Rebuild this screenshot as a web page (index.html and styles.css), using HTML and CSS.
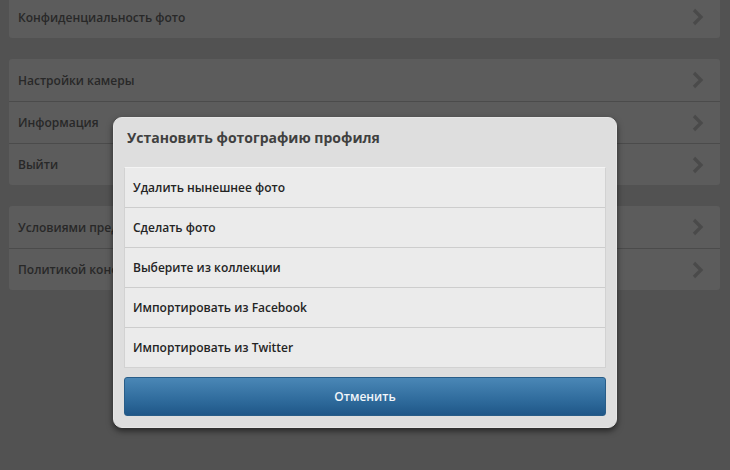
FILE: index.html
```html
<!DOCTYPE html>
<html lang="ru">
<head>
  <meta charset="UTF-8">
  <title>Настройки</title>
  <link rel="stylesheet" href="styles.css">
</head>
<body>
  <div class="settings">
    <ul class="group first">
      <li>Конфиденциальность фото<svg class="chev" viewBox="0 0 12 18"><polyline points="2,2 9,9 2,16"/></svg></li>
    </ul>
    <ul class="group">
      <li>Настройки камеры<svg class="chev" viewBox="0 0 12 18"><polyline points="2,2 9,9 2,16"/></svg></li>
      <li>Информация<svg class="chev" viewBox="0 0 12 18"><polyline points="2,2 9,9 2,16"/></svg></li>
      <li>Выйти<svg class="chev" viewBox="0 0 12 18"><polyline points="2,2 9,9 2,16"/></svg></li>
    </ul>
    <ul class="group">
      <li>Условиями предоставления услуг<svg class="chev" viewBox="0 0 12 18"><polyline points="2,2 9,9 2,16"/></svg></li>
      <li>Политикой конфиденциальности<svg class="chev" viewBox="0 0 12 18"><polyline points="2,2 9,9 2,16"/></svg></li>
    </ul>
  </div>

  <div class="dialog">
    <h2 class="dialog-title">Установить фотографию профиля</h2>
    <ul class="options">
      <li>Удалить нынешнее фото</li>
      <li>Сделать фото</li>
      <li>Выберите из коллекции</li>
      <li>Импортировать из Facebook</li>
      <li>Импортировать из Twitter</li>
    </ul>
    <button class="cancel">Отменить</button>
  </div>
</body>
</html>
```

FILE: styles.css
```css
*{margin:0;padding:0;box-sizing:border-box;}

body{background:#525252;font-family:"Open Sans","DejaVu Sans",sans-serif;overflow:hidden;width:730px;height:470px;}

/* фон: список настроек под диалогом */
.settings{padding:0 10px 0 9px;display:flex;flex-direction:column;gap:21px;}
.group{list-style:none;background:#5c5c5c;border-radius:3px;}
.group.first{margin-top:-4px;}
.group li{height:42px;display:flex;align-items:center;justify-content:space-between;padding:0 16px 0 9px;font-size:12px;font-weight:600;color:#282828;border-top:1px solid #4b4b4b;}
.group li:first-child{border-top:none;}
.chev{width:12px;height:18px;}
.chev polyline{fill:none;stroke:#4a4a4a;stroke-width:3.2;}

/* диалог */
.dialog{position:absolute;left:113px;top:117px;width:504px;height:311px;background:#dedede;border-radius:9px;padding:0 10px;box-shadow:0 3px 6px rgba(0,0,0,.55);border:1px solid #e6e6e6;}
.dialog-title{height:49px;padding:10px 0 0 3px;line-height:20px;font-size:14px;font-weight:700;color:#404040;}
.options{list-style:none;background:#ebebeb;border:1px solid #d2d2d2;border-top-color:#f4f4f4;}
.options li{height:40px;display:flex;align-items:center;padding-left:8px;font-size:12px;font-weight:600;color:#242424;border-top:1px solid #cdcdcd;}
.options li:first-child{border-top:none;height:39px;}
.cancel{display:block;width:100%;height:39px;margin-top:9px;border:1px solid #285d88;border-radius:3px;background:linear-gradient(#4a87b6,#2f6b9c 60%,#1f5788);color:#f2f6fa;font-family:"Open Sans","DejaVu Sans",sans-serif;font-size:12px;font-weight:600;}
```
